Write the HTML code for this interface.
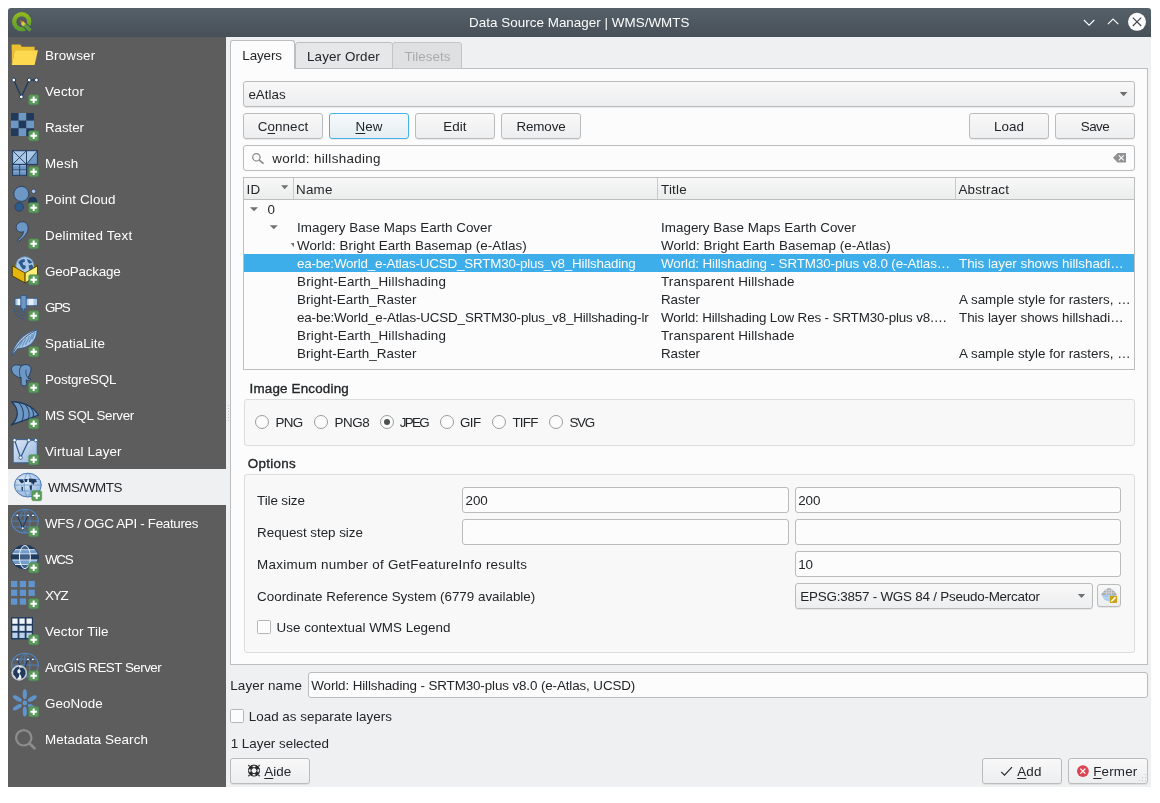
<!DOCTYPE html>
<html><head><meta charset="utf-8"><title>Data Source Manager | WMS/WMTS</title>
<style>
html,body{margin:0;padding:0;background:#fff;}
body{width:1160px;height:803px;position:relative;overflow:hidden;font-family:"Liberation Sans", sans-serif;font-size:13.4px;}
#r div{position:absolute;}
.t{position:absolute;white-space:pre;line-height:18px;height:18px;font-kerning:normal;}
.t u{text-decoration:underline;text-underline-offset:1.5px;text-decoration-thickness:1px;}
svg{position:absolute;left:0;top:0;}
#tx{position:absolute;left:0;top:0;width:1160px;height:803px;will-change:transform;}
</style></head>
<body>
<div id="r">
<div style="left:8px;top:8px;width:1143px;height:779px;background:#eff0f1;border-radius:3px 3px 0 0;"></div>
<div style="left:8px;top:8px;width:1143px;height:29px;background:linear-gradient(#566069,#475058);border-radius:3px 3px 0 0;"></div>
<div style="left:8px;top:37px;width:218px;height:750px;background:#5d5d5d;"></div>
<div style="left:8px;top:469px;width:218px;height:36px;background:#eff0f1;"></div>
<div style="left:230px;top:68px;width:918px;height:597px;background:#fcfcfc;border:1px solid #bcbebf;box-sizing:border-box;"></div>
<div style="left:295px;top:42px;width:98px;height:27px;background:#e6e7e8;border:1px solid #bcbebf;border-radius:3px 3px 0 0;box-sizing:border-box;"></div>
<div style="left:392px;top:42px;width:70px;height:27px;background:#dfe0e1;border:1px solid #c3c5c6;border-radius:3px 3px 0 0;box-sizing:border-box;"></div>
<div style="left:230px;top:40px;width:65px;height:29px;background:#fcfcfc;border:1px solid #bcbebf;border-bottom:none;border-radius:3px 3px 0 0;box-sizing:border-box;"></div>
<div style="left:243px;top:81px;width:892px;height:26px;border:1px solid #b9bbbd;border-radius:3px;background:linear-gradient(#f8f8f9,#edeeef);box-shadow:0 1px 0 rgba(0,0,0,.07);box-sizing:border-box;"></div>
<div style="left:243px;top:113px;width:80px;height:26px;border:1px solid #b9bbbd;border-radius:3px;background:linear-gradient(#f8f8f9,#edeeef);box-shadow:0 1px 0 rgba(0,0,0,.07);box-sizing:border-box;"></div>
<div style="left:415px;top:113px;width:80px;height:26px;border:1px solid #b9bbbd;border-radius:3px;background:linear-gradient(#f8f8f9,#edeeef);box-shadow:0 1px 0 rgba(0,0,0,.07);box-sizing:border-box;"></div>
<div style="left:501px;top:113px;width:80px;height:26px;border:1px solid #b9bbbd;border-radius:3px;background:linear-gradient(#f8f8f9,#edeeef);box-shadow:0 1px 0 rgba(0,0,0,.07);box-sizing:border-box;"></div>
<div style="left:969px;top:113px;width:80px;height:26px;border:1px solid #b9bbbd;border-radius:3px;background:linear-gradient(#f8f8f9,#edeeef);box-shadow:0 1px 0 rgba(0,0,0,.07);box-sizing:border-box;"></div>
<div style="left:1055px;top:113px;width:80px;height:26px;border:1px solid #b9bbbd;border-radius:3px;background:linear-gradient(#f8f8f9,#edeeef);box-shadow:0 1px 0 rgba(0,0,0,.07);box-sizing:border-box;"></div>
<div style="left:329px;top:113px;width:80px;height:26px;border:1px solid #b9bbbd;border-radius:3px;background:linear-gradient(#f8f8f9,#edeeef);box-shadow:0 1px 0 rgba(0,0,0,.07);box-sizing:border-box;border-color:#46b1ea;background:linear-gradient(#f6fafd,#e5edf2);"></div>
<div style="left:243px;top:145px;width:892px;height:26px;border:1px solid #b9bbbd;border-radius:3px;background:#fcfcfc;box-sizing:border-box;"></div>
<div style="left:243px;top:177px;width:892px;height:193px;background:#fcfcfc;border:1px solid #bcbebf;box-sizing:border-box;"></div>
<div style="left:244px;top:178px;width:890px;height:21px;background:linear-gradient(#f8f8f8,#ebecec);border-bottom:1px solid #bcbebf;"></div>
<div style="left:293px;top:178px;width:1px;height:21px;background:#c9cacb;"></div>
<div style="left:657px;top:178px;width:1px;height:21px;background:#c9cacb;"></div>
<div style="left:955px;top:178px;width:1px;height:21px;background:#c9cacb;"></div>
<div style="left:244px;top:254px;width:890px;height:18px;background:#3daee9;"></div>
<div style="left:244px;top:399px;width:891px;height:47px;background:#f8f8f8;border:1px solid #dcdddd;border-radius:3px;box-sizing:border-box;"></div>
<div style="left:244px;top:474px;width:891px;height:179px;background:#f8f8f8;border:1px solid #dcdddd;border-radius:3px;box-sizing:border-box;"></div>
<div style="left:462px;top:487px;width:327px;height:26px;border:1px solid #b9bbbd;border-radius:3px;background:#fcfcfc;box-sizing:border-box;"></div>
<div style="left:795px;top:487px;width:326px;height:26px;border:1px solid #b9bbbd;border-radius:3px;background:#fcfcfc;box-sizing:border-box;"></div>
<div style="left:462px;top:519px;width:327px;height:26px;border:1px solid #b9bbbd;border-radius:3px;background:#fcfcfc;box-sizing:border-box;"></div>
<div style="left:795px;top:519px;width:326px;height:26px;border:1px solid #b9bbbd;border-radius:3px;background:#fcfcfc;box-sizing:border-box;"></div>
<div style="left:795px;top:551px;width:326px;height:26px;border:1px solid #b9bbbd;border-radius:3px;background:#fcfcfc;box-sizing:border-box;"></div>
<div style="left:795px;top:583px;width:298px;height:26px;border:1px solid #b9bbbd;border-radius:3px;background:linear-gradient(#f8f8f9,#edeeef);box-shadow:0 1px 0 rgba(0,0,0,.07);box-sizing:border-box;"></div>
<div style="left:1097px;top:584px;width:24px;height:23px;border:1px solid #b9bbbd;border-radius:3px;background:linear-gradient(#f8f8f9,#edeeef);box-shadow:0 1px 0 rgba(0,0,0,.07);box-sizing:border-box;"></div>
<div style="left:308px;top:672px;width:840px;height:26px;border:1px solid #b9bbbd;border-radius:3px;background:#fcfcfc;box-sizing:border-box;"></div>
<div style="left:230px;top:758px;width:80px;height:26px;border:1px solid #b9bbbd;border-radius:3px;background:linear-gradient(#f8f8f9,#edeeef);box-shadow:0 1px 0 rgba(0,0,0,.07);box-sizing:border-box;"></div>
<div style="left:982px;top:758px;width:80px;height:26px;border:1px solid #b9bbbd;border-radius:3px;background:linear-gradient(#f8f8f9,#edeeef);box-shadow:0 1px 0 rgba(0,0,0,.07);box-sizing:border-box;"></div>
<div style="left:1068px;top:758px;width:80px;height:26px;border:1px solid #b9bbbd;border-radius:3px;background:linear-gradient(#f8f8f9,#edeeef);box-shadow:0 1px 0 rgba(0,0,0,.07);box-sizing:border-box;"></div>
<div style="left:257px;top:620px;width:14px;height:14px;border:1px solid #b4b6b8;border-radius:1.5px;background:#fcfcfc;box-sizing:border-box;"></div>
<div style="left:230px;top:709px;width:14px;height:14px;border:1px solid #b4b6b8;border-radius:1.5px;background:#fcfcfc;box-sizing:border-box;"></div>
<div style="left:255px;top:415px;width:14px;height:14px;border:1px solid #9a9c9e;border-radius:50%;background:#fcfcfc;box-sizing:border-box;"></div>
<div style="left:314px;top:415px;width:14px;height:14px;border:1px solid #9a9c9e;border-radius:50%;background:#fcfcfc;box-sizing:border-box;"></div>
<div style="left:380px;top:415px;width:14px;height:14px;border:1px solid #9a9c9e;border-radius:50%;background:#fcfcfc;box-sizing:border-box;"><div style="left:3px;top:3px;width:6px;height:6px;border-radius:50%;background:#4d4f51"></div></div>
<div style="left:440px;top:415px;width:14px;height:14px;border:1px solid #9a9c9e;border-radius:50%;background:#fcfcfc;box-sizing:border-box;"></div>
<div style="left:492px;top:415px;width:14px;height:14px;border:1px solid #9a9c9e;border-radius:50%;background:#fcfcfc;box-sizing:border-box;"></div>
<div style="left:549px;top:415px;width:14px;height:14px;border:1px solid #9a9c9e;border-radius:50%;background:#fcfcfc;box-sizing:border-box;"></div>
</div>
<svg width="1160" height="803" viewBox="0 0 1160 803"><defs><linearGradient id="qg" x1="0" y1="0" x2="0" y2="1"><stop offset="0" stop-color="#8fb81c"/><stop offset="1" stop-color="#5d9f2c"/></linearGradient></defs><g><circle cx="21.7" cy="21.6" r="7.500" fill="none" stroke="url(#qg)" stroke-width="4.200"/><path d="M24 24.300l6.500 6.200" stroke="#49535b" stroke-width="5.600" fill="none"/><path d="M23.800 24l6.700 6.500" stroke="#5a9e3a" stroke-width="3.600" fill="none"/><path d="M19.900 20.200l4.700 1.900-2.600 2.700z" fill="#ee7913"/><path d="M23.300 21.600l2.300 2.200-2.500 2.600-2.200-2.300z" fill="#e6d04a" opacity=".9"/></g>
<path d="M1083.900 20l5.200 5.200 5.200-5.200" stroke="#fcfcfc" stroke-width="1.100" fill="none"/>
<path d="M1107.900 24.200l5.200-5.200 5.200 5.200" stroke="#fcfcfc" stroke-width="1.100" fill="none"/>
<circle cx="1137" cy="21.800" r="9" fill="#fcfcfc"/><path d="M1132.800 17.600l8.400 8.400M1141.200 17.600l-8.400 8.400" stroke="#3b444c" stroke-width="1.100" fill="none"/>
<g transform="translate(8,37)"><path d="M3.800 7.500h8.500l1.300 2.300h13v4h-22.800z" fill="#ecbf2f"/><path d="M3.800 7.500v20.500l3.200-14.500z" fill="#ecbf2f"/><path d="M6.900 13.300h23l-3.300 14.700h-22.800z" fill="#fcd94e"/></g>
<g transform="translate(8,73)"><path d="M5.750 7l7.550 16.900 7.900-16.900h7.200" stroke="#1f3a5c" stroke-width="1.300" fill="none"/><circle cx="5.75" cy="7" r="1.900" fill="#fff" stroke="#1f3a5c" stroke-width="1"/><circle cx="21.2" cy="7" r="1.900" fill="#fff" stroke="#1f3a5c" stroke-width="1"/><circle cx="28.4" cy="7" r="1.900" fill="#fff" stroke="#1f3a5c" stroke-width="1"/><circle cx="13.3" cy="23.9" r="1.900" fill="#fff" stroke="#1f3a5c" stroke-width="1"/><g transform="translate(20.5,21.5)"><rect x="0.2" y="0.2" width="10" height="10" rx="1.7" fill="#5a9b5a" stroke="#4d8c4e" stroke-width="0.5"/><path d="M5.2 2v6.400M2 5.200h6.400" stroke="#fff" stroke-width="2" fill="none"/></g></g>
<g transform="translate(8,109)"><rect x="3.00" y="4.00" width="7.670" height="7.670" fill="#1f3a5c"/><rect x="10.67" y="4.00" width="7.670" height="7.670" fill="#6d97c4"/><rect x="18.34" y="4.00" width="7.670" height="7.670" fill="#1f3a5c"/><rect x="3.00" y="11.67" width="7.670" height="7.670" fill="#6d97c4"/><rect x="10.67" y="11.67" width="7.670" height="7.670" fill="#1f3a5c"/><rect x="18.34" y="11.67" width="7.670" height="7.670" fill="#6d97c4"/><rect x="3.00" y="19.34" width="7.670" height="7.670" fill="#1f3a5c"/><rect x="10.67" y="19.34" width="7.670" height="7.670" fill="#6d97c4"/><rect x="18.34" y="19.34" width="7.670" height="7.670" fill="#1f3a5c"/><g transform="translate(20.5,21.5)"><rect x="0.2" y="0.2" width="10" height="10" rx="1.7" fill="#5a9b5a" stroke="#4d8c4e" stroke-width="0.5"/><path d="M5.2 2v6.400M2 5.200h6.400" stroke="#fff" stroke-width="2" fill="none"/></g></g>
<g transform="translate(8,145)"><rect x="4.600" y="5.700" width="13.900" height="13.700" fill="#a9c7e6" stroke="#1f3a5c"/><path d="M4.600 5.700l13.900 13.700M18.500 5.700l-13.900 13.700" stroke="#1f3a5c" stroke-width="0.900"/><rect x="18.500" y="5.700" width="10.900" height="13.700" fill="#6d97c4" stroke="#1f3a5c"/><path d="M18.500 5.700v13.700l10.900-13.700z" fill="#a9c7e6" stroke="#1f3a5c" stroke-width="0.900"/><rect x="4.600" y="19.400" width="13.900" height="10.900" fill="#6d97c4" stroke="#1f3a5c"/><path d="M11.600 19.400v10.900M4.600 24.900h13.900" stroke="#1f3a5c" stroke-width="0.800"/><path d="M5.300 20.700h5.600M12.300 20.700h5.600M5.300 26h5.600M12.300 26h5.600" stroke="#a9c7e6" stroke-width="0.800" opacity=".8"/><g transform="translate(20.5,21.5)"><rect x="0.2" y="0.2" width="10" height="10" rx="1.7" fill="#5a9b5a" stroke="#4d8c4e" stroke-width="0.5"/><path d="M5.2 2v6.400M2 5.200h6.400" stroke="#fff" stroke-width="2" fill="none"/></g></g>
<g transform="translate(8,181)"><circle cx="24.700" cy="20.200" r="4.500" fill="#1f3a5c"/><circle cx="13.300" cy="12.900" r="7.500" fill="#6d97c4" stroke="#1f3a5c" stroke-width="0.800"/><circle cx="25.600" cy="10.300" r="2.200" fill="#a9c7e6" stroke="#1f3a5c" stroke-width="0.700"/><circle cx="11.200" cy="25.900" r="4.300" fill="#2f5a8e" stroke="#1f3a5c" stroke-width="0.700"/><g transform="translate(20.5,21.5)"><rect x="0.2" y="0.2" width="10" height="10" rx="1.7" fill="#5a9b5a" stroke="#4d8c4e" stroke-width="0.5"/><path d="M5.2 2v6.400M2 5.200h6.400" stroke="#fff" stroke-width="2" fill="none"/></g></g>
<g transform="translate(8,217)"><path d="M8.500 8.500c1.500-3.500 6-4.800 9-2.800c3.200 2.300 3.300 7 1.200 10.600c-2 3.500-5.300 6.300-8.600 8.200l-0.900-1.300c3.300-2.200 6-5.400 6.400-8.700c-2.800 1.300-6 0.300-7-2.200c-0.500-1.200-0.500-2.600-0.100-3.800z" fill="#6d97c4" stroke="#1f3a5c" stroke-width="0.800"/><g transform="translate(20.5,21.5)"><rect x="0.2" y="0.2" width="10" height="10" rx="1.7" fill="#5a9b5a" stroke="#4d8c4e" stroke-width="0.5"/><path d="M5.2 2v6.400M2 5.200h6.400" stroke="#fff" stroke-width="2" fill="none"/></g></g>
<g transform="translate(8,253)"><path d="M4.300 12.800l12.700-5.500 12.500 5.500-12.400 7.200z" fill="#7a6500"/><circle cx="16.900" cy="12.700" r="9" fill="#a9c7e6" stroke="#6a94c6" stroke-width="0.800"/><path d="M10.300 9.200c1.800-2.300 4-3.300 6.200-3.200l0.600 2.500-2.600 1.300 0.800 2.200 2.600 0.800-0.600 3-2.300 0.600-2.200-3zM19 5.900c2.300 0.400 4 1.600 5.300 3.500l-2.700 1.400-1.800-1.800zM20.500 12.500l3.400-1 1.400 2.600-1.300 3.600-2.600-1z" fill="#2f5a8e"/><path d="M4.300 12.800l12.800 7.200v9.900l-12.800-7z" fill="#e6b60e" stroke="#3a3000" stroke-width="0.800" stroke-linejoin="round"/><path d="M17.100 20l12.400-7.200v9.400l-12.400 7.700z" fill="#fdf07a" stroke="#3a3000" stroke-width="0.800" stroke-linejoin="round"/><g transform="translate(20.5,21.5)"><rect x="0.2" y="0.2" width="10" height="10" rx="1.7" fill="#5a9b5a" stroke="#4d8c4e" stroke-width="0.5"/><path d="M5.2 2v6.400M2 5.200h6.400" stroke="#fff" stroke-width="2" fill="none"/></g></g>
<g transform="translate(8,289)"><path d="M6 19.500a11.500 11.500 0 0 0 11.500 10.700M9.500 19.500a8 8 0 0 0 8 7.400M13 19.500a4.500 4.500 0 0 0 4.500 4.200" stroke="#2f5a8e" stroke-width="0.900" fill="none"/><rect x="7" y="9.300" width="22.500" height="7.400" fill="#a9c7e6" stroke="#2f5a8e" stroke-width="0.900"/><rect x="9.600" y="9.800" width="2.600" height="6.400" fill="#fff" opacity=".8"/><rect x="20.500" y="9.800" width="5" height="6.400" fill="#fff" opacity=".7"/><path d="M12.900 6.500h5.300v13.300h-2v2.400h-1.500v-2.400h-1.800z" fill="#6d97c4" stroke="#2f5a8e" stroke-width="0.900"/><g transform="translate(20.5,21.5)"><rect x="0.2" y="0.2" width="10" height="10" rx="1.7" fill="#5a9b5a" stroke="#4d8c4e" stroke-width="0.5"/><path d="M5.2 2v6.400M2 5.200h6.400" stroke="#fff" stroke-width="2" fill="none"/></g></g>
<g transform="translate(8,325)"><path d="M3.400 31.700c1.200-6.500 4-12.300 8.600-17.200c4.600-4.900 10.600-8.300 17-10c0.200 4.800-1.200 9-4.200 12.600c-3.600 4.200-8.700 6.300-15 6.400c-2 2.400-4 5-6.400 8.200z" fill="#a9c7e6" stroke="#2f5a8e" stroke-width="0.800"/><path d="M11 22l3.500-6.500M14 21.500l4-8M17.500 20l4-9M21 17.500l3.500-8.500M24 14.500l3-7.500" stroke="#6d97c4" stroke-width="1.400"/><path d="M4 30.500c3.500-9 11-18.500 24.500-25.500" stroke="#1f3a5c" stroke-width="0.700" fill="none"/><g transform="translate(20.5,21.5)"><rect x="0.2" y="0.2" width="10" height="10" rx="1.7" fill="#5a9b5a" stroke="#4d8c4e" stroke-width="0.5"/><path d="M5.2 2v6.400M2 5.200h6.400" stroke="#fff" stroke-width="2" fill="none"/></g></g>
<g transform="translate(8,361)"><g transform="translate(-1.400,0.300)"><path d="M5 9c-1-3 1.500-5.500 5-5.500c2 0 3.500 0.500 4.500 1.500c1.500-1.500 4-2 6.500-1.500c3 0.800 4 3.500 3 7c-0.500 2-1.500 4-2.500 5.500l0.500 1.500 2-0.300v1.200c-1.500 0.800-3 0.800-4.300 0.200l0.300 3.400c0.200 2-1.500 3-3.500 2.500c-1.500-0.500-2-1.500-2-3.500v-5c-1 0.500-2.500 0.500-3.500-0.500c-2.500-1-5-3-6-6.500z" fill="#6d97c4" stroke="#1f3a5c" stroke-width="0.900"/><path d="M14.500 5c-1.500 2-2 4.500-1.500 7.500c0.500 2 0.500 3.500 0 4.500M19.500 8.500c-0.500 2.500-0.200 5 1.500 8" stroke="#1f3a5c" stroke-width="0.800" fill="none"/></g><g transform="translate(20.5,21.5)"><rect x="0.2" y="0.2" width="10" height="10" rx="1.7" fill="#5a9b5a" stroke="#4d8c4e" stroke-width="0.5"/><path d="M5.2 2v6.400M2 5.200h6.400" stroke="#fff" stroke-width="2" fill="none"/></g></g>
<g transform="translate(8,397)"><path d="M3.500 4.800c9.500-0.600 21 3.700 27 13.200c-8.500 3.500-18.500 6.700-27.300 10.200c7.300-6.700 8.800-15.700 0.300-23.400z" fill="#6d97c4" stroke="#1f3a5c" stroke-width="1.300" stroke-linejoin="round"/><path d="M11 5.800c5 6 5.500 13.200 2.500 19M17.500 8c4 5 4.500 10 2.500 14.700M23 11c2.500 3.500 3 6.200 2 9.200" stroke="#1f3a5c" stroke-width="1" fill="none"/><g transform="translate(20.5,21.5)"><rect x="0.2" y="0.2" width="10" height="10" rx="1.7" fill="#5a9b5a" stroke="#4d8c4e" stroke-width="0.5"/><path d="M5.2 2v6.400M2 5.200h6.400" stroke="#fff" stroke-width="2" fill="none"/></g></g>
<g transform="translate(8,433)"><defs><linearGradient id="vl" x1="0" y1="0" x2="1" y2="1"><stop offset="0" stop-color="#dfe8f4"/><stop offset="1" stop-color="#94b5de"/></linearGradient></defs><rect x="5.200" y="6.600" width="24" height="23.200" rx="1.500" fill="url(#vl)" stroke="#2f5a8e" stroke-width="0.900"/><path d="M6.600 7.200l6 17.400 8.200-17.400h7" stroke="#2f5a8e" stroke-width="1.200" fill="none"/><circle cx="6.6" cy="7.2" r="1.700" fill="#fff" stroke="#2f5a8e" stroke-width="0.900"/><circle cx="20.8" cy="7.2" r="1.700" fill="#fff" stroke="#2f5a8e" stroke-width="0.900"/><circle cx="27.8" cy="7.2" r="1.700" fill="#fff" stroke="#2f5a8e" stroke-width="0.900"/><circle cx="12.6" cy="24.6" r="1.700" fill="#fff" stroke="#2f5a8e" stroke-width="0.900"/><g transform="translate(20.5,21.5)"><rect x="0.2" y="0.2" width="10" height="10" rx="1.7" fill="#5a9b5a" stroke="#4d8c4e" stroke-width="0.5"/><path d="M5.2 2v6.400M2 5.200h6.400" stroke="#fff" stroke-width="2" fill="none"/></g></g>
<g transform="translate(11,469)"><defs><radialGradient id="gl" cx=".4" cy=".35" r=".7"><stop offset="0" stop-color="#e6f0fa"/><stop offset="1" stop-color="#8fb4dc"/></radialGradient></defs><ellipse cx="16.9" cy="16.1" rx="13.4" ry="11.9" fill="url(#gl)" stroke="#4a7ab5" stroke-width="1"/><path d="M16.900 4.200c-5 3-5 20.800 0 23.800M16.900 4.200c5 3 5 20.800 0 23.800M3.500 16.100h26.800M5.500 10.500h22.800M5.500 22h22.800" stroke="#5f8fc6" stroke-width="0.700" fill="none"/><path d="M7.500 10.500h4.500l1 2.500-2 1.500-1.500-1zM13.500 10h3l-0.500 3h-2zM18 9.500l6.500 0.500 1.500 3-2.500 0.500-1 2.500-2-2.500-2.500-0.500zM10.500 17.500l1.500 0.500-0.300 4.500-1.200-1.500zM18.500 16.500h2.500l-0.500 5-1.500-1z" fill="#1f3a5c"/><g transform="translate(20.5,21.5)"><rect x="0.2" y="0.2" width="10" height="10" rx="1.7" fill="#5a9b5a" stroke="#4d8c4e" stroke-width="0.5"/><path d="M5.2 2v6.400M2 5.200h6.400" stroke="#fff" stroke-width="2" fill="none"/></g></g>
<g transform="translate(8,505)"><ellipse cx="16.9" cy="16.1" rx="13.4" ry="11.9" fill="none" stroke="#4f86c6" stroke-width="1.100"/><path d="M16.900 4.200c-7 4-7 20-0 23.800M16.900 4.200c7 4 7 20 0 23.800M3.500 16.100h26.800M5.300 10.300h23.200M5.300 22h23.200M16.900 4.200v23.800" stroke="#4f86c6" stroke-width="0.800" fill="none"/><path d="M9.300 10.300l5.400 12.900 5.400-12.900h4.900" stroke="#1f3a5c" stroke-width="1.100" fill="none"/><circle cx="9.3" cy="10.3" r="1.400" fill="#fff" stroke="#1f3a5c" stroke-width="0.800"/><circle cx="20.1" cy="10.3" r="1.400" fill="#fff" stroke="#1f3a5c" stroke-width="0.800"/><circle cx="25" cy="10.3" r="1.400" fill="#fff" stroke="#1f3a5c" stroke-width="0.800"/><circle cx="14.7" cy="23.2" r="1.400" fill="#fff" stroke="#1f3a5c" stroke-width="0.800"/><g transform="translate(20.5,21.5)"><rect x="0.2" y="0.2" width="10" height="10" rx="1.7" fill="#5a9b5a" stroke="#4d8c4e" stroke-width="0.5"/><path d="M5.2 2v6.400M2 5.200h6.400" stroke="#fff" stroke-width="2" fill="none"/></g></g>
<g transform="translate(8,541)"><clipPath id="wc"><ellipse cx="16.900" cy="16.050" rx="13.700" ry="11.900"/></clipPath><g clip-path="url(#wc)"><rect x="3" y="4" width="28" height="24.500" fill="#1f3a5c"/><rect x="3" y="8.200" width="28" height="5.100" fill="#e8eef6"/><rect x="3" y="9.200" width="28" height="3.100" fill="#6d97c4"/><rect x="3" y="18.500" width="28" height="5.500" fill="#e8eef6"/><rect x="3" y="19.500" width="28" height="3.500" fill="#6d97c4"/><ellipse cx="16.900" cy="16.050" rx="5.500" ry="11.900" fill="#7fa8d8" opacity=".35"/></g><ellipse cx="16.900" cy="16.050" rx="13.700" ry="11.900" fill="none" stroke="#1f3a5c" stroke-width="1"/><ellipse cx="16.900" cy="16.050" rx="5.500" ry="11.600" fill="none" stroke="#eef3f9" stroke-width="1"/><g transform="translate(20.5,21.5)"><rect x="0.2" y="0.2" width="10" height="10" rx="1.7" fill="#5a9b5a" stroke="#4d8c4e" stroke-width="0.5"/><path d="M5.2 2v6.400M2 5.200h6.400" stroke="#fff" stroke-width="2" fill="none"/></g></g>
<g transform="translate(8,577)"><rect x="3.00" y="3.90" width="6.300" height="6.300" fill="#5f94cd"/><rect x="11.77" y="3.90" width="6.300" height="6.300" fill="#5f94cd"/><rect x="20.54" y="3.90" width="6.300" height="6.300" fill="#5f94cd"/><rect x="3.00" y="12.67" width="6.300" height="6.300" fill="#5f94cd"/><rect x="11.77" y="12.67" width="6.300" height="6.300" fill="#5f94cd"/><rect x="20.54" y="12.67" width="6.300" height="6.300" fill="#5f94cd"/><rect x="3.00" y="21.44" width="6.300" height="6.300" fill="#5f94cd"/><rect x="11.77" y="21.44" width="6.300" height="6.300" fill="#5f94cd"/><g transform="translate(20.5,21.5)"><rect x="0.2" y="0.2" width="10" height="10" rx="1.7" fill="#5a9b5a" stroke="#4d8c4e" stroke-width="0.5"/><path d="M5.2 2v6.400M2 5.200h6.400" stroke="#fff" stroke-width="2" fill="none"/></g></g>
<g transform="translate(8,613)"><rect x="3" y="4.200" width="22" height="22.200" fill="#1f3a5c"/><rect x="4.30" y="5.50" width="5.300" height="5.300" fill="#f2f5fa"/><rect x="11.40" y="5.50" width="5.300" height="5.300" fill="#f2f5fa"/><rect x="18.50" y="5.50" width="5.300" height="5.300" fill="#f2f5fa"/><rect x="4.30" y="12.60" width="5.300" height="5.300" fill="#dbe6f3"/><rect x="11.40" y="12.60" width="5.300" height="5.300" fill="#dbe6f3"/><rect x="18.50" y="12.60" width="5.300" height="5.300" fill="#dbe6f3"/><rect x="4.30" y="19.70" width="5.300" height="5.300" fill="#b9cfea"/><rect x="11.40" y="19.70" width="5.300" height="5.300" fill="#b9cfea"/><rect x="18.50" y="19.70" width="5.300" height="5.300" fill="#b9cfea"/><g transform="translate(20.5,21.5)"><rect x="0.2" y="0.2" width="10" height="10" rx="1.7" fill="#5a9b5a" stroke="#4d8c4e" stroke-width="0.5"/><path d="M5.2 2v6.400M2 5.200h6.400" stroke="#fff" stroke-width="2" fill="none"/></g></g>
<g transform="translate(8,649)"><ellipse cx="16.9" cy="16.1" rx="13.4" ry="11.9" fill="none" stroke="#4f86c6" stroke-width="1.100"/><path d="M16.900 4.200c-7 4-7 20-0 23.800M16.900 4.200c7 4 7 20 0 23.800M3.500 16.100h26.800M5.300 10.300h23.200M16.900 4.200v23.800" stroke="#4f86c6" stroke-width="0.800" fill="none"/><path d="M9.400 10.400l5.300 13 5.300-13h4.900" stroke="#1f3a5c" stroke-width="1.100" fill="none"/><circle cx="9.4" cy="10.4" r="1.400" fill="#fff" stroke="#1f3a5c" stroke-width="0.800"/><circle cx="20" cy="10.4" r="1.400" fill="#fff" stroke="#1f3a5c" stroke-width="0.800"/><circle cx="24.9" cy="10.4" r="1.400" fill="#fff" stroke="#1f3a5c" stroke-width="0.800"/><circle cx="11.200" cy="23.800" r="7.300" fill="#eef0f2" stroke="#c4c8cc" stroke-width="1.100"/><path d="M5.200 22l2.300-3.200 3.200-1.300 1.200 1.600-2.300 1.800-0.300 2.300 2.100 1.700-0.600 3-2.100 2.400-1.700-2.900-1.800-1.900zM12.300 18.500l2.800 0.200 2.200 2.600 0.400 3.400-1.700 3.600-2.500 1.700-0.300-3.100-1.700-2.300 1.400-2.700-1.400-1.700z" fill="#1f3a5c"/><g transform="translate(20.5,21.5)"><rect x="0.2" y="0.2" width="10" height="10" rx="1.7" fill="#5a9b5a" stroke="#4d8c4e" stroke-width="0.5"/><path d="M5.2 2v6.400M2 5.200h6.400" stroke="#fff" stroke-width="2" fill="none"/></g></g>
<g transform="translate(8,685)"><ellipse cx="16.800" cy="9.300" rx="2.100" ry="5" fill="#5f94cd" transform="rotate(0 16.800 17.900)"/><ellipse cx="16.800" cy="9.300" rx="2.100" ry="5" fill="#5f94cd" transform="rotate(60 16.800 17.900)"/><ellipse cx="16.800" cy="9.300" rx="2.100" ry="5" fill="#5f94cd" transform="rotate(120 16.800 17.900)"/><ellipse cx="16.800" cy="9.300" rx="2.100" ry="5" fill="#5f94cd" transform="rotate(180 16.800 17.900)"/><ellipse cx="16.800" cy="9.300" rx="2.100" ry="5" fill="#5f94cd" transform="rotate(240 16.800 17.900)"/><ellipse cx="16.800" cy="9.300" rx="2.100" ry="5" fill="#5f94cd" transform="rotate(300 16.800 17.900)"/><circle cx="16.800" cy="17.900" r="2.400" fill="#5f94cd"/><g transform="translate(20.5,21.5)"><rect x="0.2" y="0.2" width="10" height="10" rx="1.7" fill="#5a9b5a" stroke="#4d8c4e" stroke-width="0.5"/><path d="M5.2 2v6.400M2 5.200h6.400" stroke="#fff" stroke-width="2" fill="none"/></g></g>
<g transform="translate(8,721)"><circle cx="15.750" cy="16.800" r="7.700" fill="none" stroke="#8c8c8c" stroke-width="2.200"/><path d="M21.500 22.500l5 4.800" stroke="#8c8c8c" stroke-width="2.800" stroke-linecap="round"/></g>
<circle cx="256.4" cy="157.3" r="3.7" fill="none" stroke="#85878a" stroke-width="1.200"/><path d="M259.200 160.100l4.400 3.600" stroke="#85878a" stroke-width="1.500" fill="none"/>
<path d="M1113 157.8l4.600-4.800h8.400v9.600h-8.400z" fill="#8f9193"/><path d="M1118.800 155.300l5 5M1123.800 155.300l-5 5" stroke="#fcfcfc" stroke-width="1.100" fill="none"/>
<path d="M1119.700 91.900h7.800l-3.900 4.300z" fill="#6e7072"/>
<path d="M1077.800 594h7.400l-3.700 4.100z" fill="#6e7072"/>
<path d="M281.100 185.300h7.200l-3.600 4z" fill="#6e7072"/>
<path d="M250 207.200h8l-4 4.100z" fill="#6e7072"/>
<path d="M269.800 225.200h8l-4 4.100z" fill="#6e7072"/>
<path d="M290.700 243h3.300v4.300z" fill="#6e7072"/>
<rect x="228" y="405" width="1" height="1" fill="#bfc1c2"/>
<rect x="228" y="408" width="1" height="1" fill="#bfc1c2"/>
<rect x="228" y="411" width="1" height="1" fill="#bfc1c2"/>
<rect x="228" y="414" width="1" height="1" fill="#bfc1c2"/>
<rect x="228" y="417" width="1" height="1" fill="#bfc1c2"/>
<rect x="228" y="420" width="1" height="1" fill="#bfc1c2"/>
<rect x="1145" y="774" width="1" height="1" fill="#c6c8c9"/>
<rect x="1142" y="777" width="1" height="1" fill="#c6c8c9"/>
<rect x="1145" y="777" width="1" height="1" fill="#c6c8c9"/>
<rect x="1139" y="780" width="1" height="1" fill="#c6c8c9"/>
<rect x="1142" y="780" width="1" height="1" fill="#c6c8c9"/>
<rect x="1145" y="780" width="1" height="1" fill="#c6c8c9"/>
<rect x="1136" y="783" width="1" height="1" fill="#c6c8c9"/>
<rect x="1139" y="783" width="1" height="1" fill="#c6c8c9"/>
<rect x="1142" y="783" width="1" height="1" fill="#c6c8c9"/>
<rect x="1145" y="783" width="1" height="1" fill="#c6c8c9"/>
<clipPath id="cl"><rect x="1100" y="595" width="18" height="9"/></clipPath><path d="M1101 595.200q2.500-5.300 8-7.500q5.500 2.200 8 7.500z" fill="#a9adb1"/><circle cx="1109" cy="594.600" r="6.700" fill="#a6cbf0" clip-path="url(#cl)"/><path d="M1103 592.800h12M1105 590.600h8M1106.500 589v6M1111.500 589v6M1109 588v7" stroke="#dfe2e5" stroke-width="0.600"/><path d="M1104 598h10M1109 595v7" stroke="#d3e6f8" stroke-width="0.600"/><rect x="1109.800" y="595.800" width="7.300" height="7.100" rx="0.800" fill="#c9a416"/><path d="M1111.300 601.500l4.300-4.300" stroke="#fff" stroke-width="1.500"/>
<circle cx="254.0" cy="770.6" r="5.500" fill="none" stroke="#232629" stroke-width="1"/><circle cx="254.0" cy="770.6" r="3" fill="none" stroke="#232629" stroke-width="1"/><path d="M259.19 772.70A5.6 5.6 0 0 1 256.10 775.79L255.16 773.47A3.1 3.1 0 0 0 256.87 771.76zM251.90 775.79A5.6 5.6 0 0 1 248.81 772.70L251.13 771.76A3.1 3.1 0 0 0 252.84 773.47zM248.81 768.50A5.6 5.6 0 0 1 251.90 765.41L252.84 767.73A3.1 3.1 0 0 0 251.13 769.44zM256.10 765.41A5.6 5.6 0 0 1 259.19 768.50L256.87 769.44A3.1 3.1 0 0 0 255.16 767.73z" fill="#232629" stroke="#232629" stroke-width="0.5"/><path d="M249.80 766.40L248.30 764.90M249.80 774.80L248.30 776.30M258.20 766.40L259.70 764.90M258.20 774.80L259.70 776.30" stroke="#232629" stroke-width="1.4" opacity=".8"/>
<path d="M1001.200 771.800l3.300 3.300 7.500-7.900" stroke="#232629" stroke-width="1.100" fill="none"/>
<circle cx="1082.900" cy="771.100" r="5.900" fill="#da4453"/><path d="M1080.400 768.600l5 5M1085.400 768.600l-5 5" stroke="#fff" stroke-width="1.300" fill="none"/></svg>
<div id="tx">
<span class="t" style="left:45.00px;top:47.00px;color:#ffffff;letter-spacing:0.170px;">Browser</span>
<span class="t" style="left:45.00px;top:83.00px;color:#ffffff;letter-spacing:0.180px;">Vector</span>
<span class="t" style="left:45.00px;top:119.00px;color:#ffffff;letter-spacing:-0.073px;">Raster</span>
<span class="t" style="left:45.00px;top:155.00px;color:#ffffff;letter-spacing:0.160px;">Mesh</span>
<span class="t" style="left:45.00px;top:191.00px;color:#ffffff;letter-spacing:0.129px;">Point Cloud</span>
<span class="t" style="left:45.00px;top:227.00px;color:#ffffff;letter-spacing:0.253px;">Delimited Text</span>
<span class="t" style="left:45.00px;top:263.00px;color:#ffffff;letter-spacing:-0.180px;">GeoPackage</span>
<span class="t" style="left:45.00px;top:299.00px;color:#ffffff;letter-spacing:-1.271px;">GPS</span>
<span class="t" style="left:45.00px;top:335.00px;color:#ffffff;letter-spacing:0.041px;">SpatiaLite</span>
<span class="t" style="left:45.00px;top:371.00px;color:#ffffff;letter-spacing:-0.175px;">PostgreSQL</span>
<span class="t" style="left:45.00px;top:407.00px;color:#ffffff;letter-spacing:-0.333px;">MS SQL Server</span>
<span class="t" style="left:45.00px;top:443.00px;color:#ffffff;letter-spacing:0.137px;">Virtual Layer</span>
<span class="t" style="left:48.00px;top:479.00px;color:#232629;letter-spacing:-0.406px;">WMS/WMTS</span>
<span class="t" style="left:45.00px;top:515.00px;color:#ffffff;letter-spacing:-0.319px;">WFS / OGC API - Features</span>
<span class="t" style="left:45.00px;top:551.00px;color:#ffffff;letter-spacing:-1.307px;">WCS</span>
<span class="t" style="left:45.00px;top:587.00px;color:#ffffff;letter-spacing:-1.208px;">XYZ</span>
<span class="t" style="left:45.00px;top:623.00px;color:#ffffff;letter-spacing:0.105px;">Vector Tile</span>
<span class="t" style="left:45.00px;top:659.00px;color:#ffffff;letter-spacing:-0.515px;">ArcGIS REST Server</span>
<span class="t" style="left:45.00px;top:695.00px;color:#ffffff;letter-spacing:0.058px;">GeoNode</span>
<span class="t" style="left:45.00px;top:731.00px;color:#ffffff;letter-spacing:0.062px;">Metadata Search</span>
<span class="t" style="left:469.10px;top:14.00px;color:#fcfcfc;letter-spacing:0.037px;">Data Source Manager | WMS/WMTS</span>
<span class="t" style="left:242.30px;top:47.00px;color:#232629;letter-spacing:-0.089px;">Layers</span>
<span class="t" style="left:307.00px;top:48.00px;color:#232629;letter-spacing:0.121px;">Layer Order</span>
<span class="t" style="left:404.60px;top:48.00px;color:#a9abac;letter-spacing:0.014px;">Tilesets</span>
<span class="t" style="left:248.40px;top:85.50px;color:#232629;letter-spacing:0.000px;">eAtlas</span>
<span class="t" style="left:257.79px;top:118.00px;color:#232629;letter-spacing:0.078px;">C<u>o</u>nnect</span>
<span class="t" style="left:355.41px;top:118.00px;color:#232629;letter-spacing:0.125px;"><u>N</u>ew</span>
<span class="t" style="left:443.36px;top:118.00px;color:#232629;letter-spacing:0.051px;">Edit</span>
<span class="t" style="left:516.44px;top:118.00px;color:#232629;letter-spacing:-0.125px;">Remove</span>
<span class="t" style="left:994.02px;top:118.00px;color:#232629;letter-spacing:0.043px;">Load</span>
<span class="t" style="left:1080.81px;top:118.00px;color:#232629;letter-spacing:-0.539px;">Save</span>
<span class="t" style="left:272.20px;top:150.00px;color:#232629;letter-spacing:0.332px;">world: hillshading</span>
<span class="t" style="left:246.50px;top:180.50px;color:#232629;letter-spacing:0.250px;">ID</span>
<span class="t" style="left:296.00px;top:180.50px;color:#232629;letter-spacing:0.234px;">Name</span>
<span class="t" style="left:661.00px;top:180.50px;color:#232629;letter-spacing:0.231px;">Title</span>
<span class="t" style="left:958.50px;top:180.50px;color:#232629;letter-spacing:0.180px;">Abstract</span>
<span class="t" style="left:267.50px;top:201.00px;color:#232629;letter-spacing:-0.016px;">0</span>
<span class="t" style="left:297.00px;top:219.00px;color:#232629;letter-spacing:0.028px;">Imagery Base Maps Earth Cover</span>
<span class="t" style="left:661.00px;top:219.00px;color:#232629;letter-spacing:0.028px;">Imagery Base Maps Earth Cover</span>
<span class="t" style="left:297.00px;top:237.00px;color:#232629;letter-spacing:0.065px;">World: Bright Earth Basemap (e-Atlas)</span>
<span class="t" style="left:661.00px;top:237.00px;color:#232629;letter-spacing:0.065px;">World: Bright Earth Basemap (e-Atlas)</span>
<span class="t" style="left:297.00px;top:255.00px;color:#fcfcfc;letter-spacing:-0.180px;">ea-be:World_e-Atlas-UCSD_SRTM30-plus_v8_Hillshading</span>
<span class="t" style="left:661.00px;top:255.00px;color:#fcfcfc;letter-spacing:-0.094px;">World: Hillshading - SRTM30-plus v8.0 (e-Atlas…</span>
<span class="t" style="left:959.00px;top:255.00px;color:#fcfcfc;letter-spacing:-0.024px;">This layer shows hillshadi…</span>
<span class="t" style="left:297.00px;top:273.00px;color:#232629;letter-spacing:0.196px;">Bright-Earth_Hillshading</span>
<span class="t" style="left:661.00px;top:273.00px;color:#232629;letter-spacing:0.150px;">Transparent Hillshade</span>
<span class="t" style="left:297.00px;top:291.00px;color:#232629;letter-spacing:0.060px;">Bright-Earth_Raster</span>
<span class="t" style="left:661.00px;top:291.00px;color:#232629;letter-spacing:-0.073px;">Raster</span>
<span class="t" style="left:959.00px;top:291.00px;color:#232629;letter-spacing:0.013px;">A sample style for rasters, …</span>
<span class="t" style="left:297.00px;top:309.00px;color:#232629;letter-spacing:-0.151px;">ea-be:World_e-Atlas-UCSD_SRTM30-plus_v8_Hillshading-lr</span>
<span class="t" style="left:661.00px;top:309.00px;color:#232629;letter-spacing:-0.133px;">World: Hillshading Low Res - SRTM30-plus v8.…</span>
<span class="t" style="left:959.00px;top:309.00px;color:#232629;letter-spacing:-0.024px;">This layer shows hillshadi…</span>
<span class="t" style="left:297.00px;top:327.00px;color:#232629;letter-spacing:0.196px;">Bright-Earth_Hillshading</span>
<span class="t" style="left:661.00px;top:327.00px;color:#232629;letter-spacing:0.150px;">Transparent Hillshade</span>
<span class="t" style="left:297.00px;top:345.00px;color:#232629;letter-spacing:0.060px;">Bright-Earth_Raster</span>
<span class="t" style="left:661.00px;top:345.00px;color:#232629;letter-spacing:-0.073px;">Raster</span>
<span class="t" style="left:959.00px;top:345.00px;color:#232629;letter-spacing:0.013px;">A sample style for rasters, …</span>
<span class="t" style="left:249.60px;top:380.00px;color:#232629;letter-spacing:0.181px;-webkit-text-stroke:0.35px #232629;">Image Encoding</span>
<span class="t" style="left:275.40px;top:413.50px;color:#232629;letter-spacing:-0.604px;">PNG</span>
<span class="t" style="left:334.50px;top:413.50px;color:#232629;letter-spacing:-0.453px;">PNG8</span>
<span class="t" style="left:399.80px;top:413.50px;color:#232629;letter-spacing:-1.719px;">JPEG</span>
<span class="t" style="left:460.00px;top:413.50px;color:#232629;letter-spacing:-0.568px;">GIF</span>
<span class="t" style="left:512.40px;top:413.50px;color:#232629;letter-spacing:-0.781px;">TIFF</span>
<span class="t" style="left:569.50px;top:413.50px;color:#232629;letter-spacing:-1.333px;">SVG</span>
<span class="t" style="left:247.80px;top:454.50px;color:#232629;letter-spacing:0.310px;-webkit-text-stroke:0.35px #232629;">Options</span>
<span class="t" style="left:257.10px;top:492.00px;color:#232629;letter-spacing:-0.106px;">Tile size</span>
<span class="t" style="left:257.10px;top:524.00px;color:#232629;letter-spacing:-0.042px;">Request step size</span>
<span class="t" style="left:257.10px;top:556.00px;color:#232629;letter-spacing:0.280px;">Maximum number of GetFeatureInfo results</span>
<span class="t" style="left:257.10px;top:588.00px;color:#232629;letter-spacing:-0.006px;">Coordinate Reference System (6779 available)</span>
<span class="t" style="left:276.60px;top:619.00px;color:#232629;letter-spacing:0.018px;">Use contextual WMS Legend</span>
<span class="t" style="left:465.50px;top:492.00px;color:#232629;letter-spacing:-0.010px;">200</span>
<span class="t" style="left:798.20px;top:492.00px;color:#232629;letter-spacing:-0.010px;">200</span>
<span class="t" style="left:798.20px;top:556.00px;color:#232629;letter-spacing:-0.016px;">10</span>
<span class="t" style="left:800.30px;top:588.00px;color:#232629;letter-spacing:-0.211px;">EPSG:3857 - WGS 84 / Pseudo-Mercator</span>
<span class="t" style="left:230.30px;top:677.00px;color:#232629;letter-spacing:0.092px;">Layer name</span>
<span class="t" style="left:311.30px;top:677.00px;color:#232629;letter-spacing:-0.114px;">World: Hillshading - SRTM30-plus v8.0 (e-Atlas, UCSD)</span>
<span class="t" style="left:248.80px;top:708.00px;color:#232629;letter-spacing:0.007px;">Load as separate layers</span>
<span class="t" style="left:230.70px;top:735.00px;color:#232629;letter-spacing:-0.008px;">1 Layer selected</span>
<span class="t" style="left:264.30px;top:763.00px;color:#232629;letter-spacing:0.047px;"><u>A</u>ide</span>
<span class="t" style="left:1017.20px;top:763.00px;color:#232629;letter-spacing:0.161px;"><u>A</u>dd</span>
<span class="t" style="left:1093.20px;top:763.00px;color:#232629;letter-spacing:0.193px;"><u>F</u>ermer</span>
</div>
</body></html>
